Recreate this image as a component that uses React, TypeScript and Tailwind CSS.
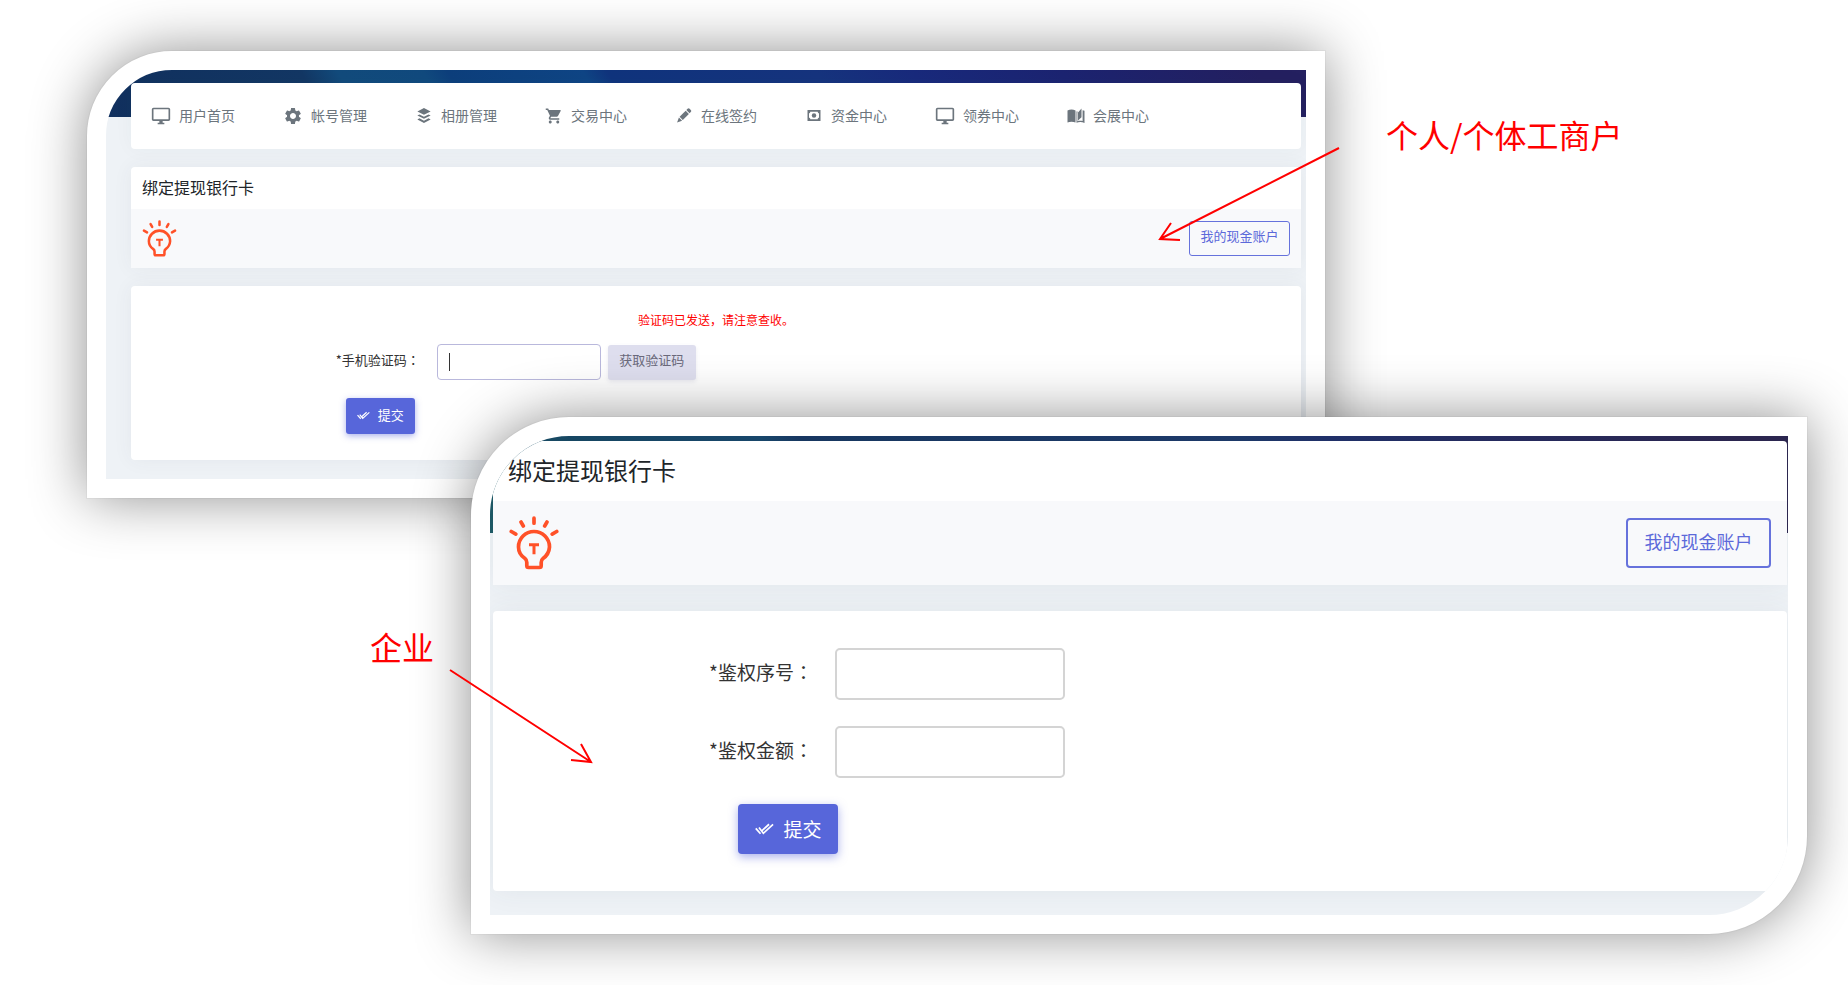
import type { ReactNode, SVGProps } from 'react';
import { MdOutlineDesktopWindows, MdSettings, MdShoppingCart } from 'react-icons/md';
import { SiBuffer } from 'react-icons/si';

function PencilIcon(props: SVGProps<SVGSVGElement>) {
  return (
    <svg viewBox="0 0 16 16" fill="currentColor" aria-hidden="true" {...props}>
      <path d="M11.8.9a1.600 1.600 0 0 1 2.200 0l1.200 1.200a1.600 1.600 0 0 1 0 2.200l-1.300 1.300-3.400-3.400z" />
      <path d="M9.800 2.900l3.400 3.400-6.500 6.500-3.400-3.400z" />
      <path d="M2.600 10.100l3.400 3.400L.6 15.400z" />
    </svg>
  );
}

function CashIcon(props: SVGProps<SVGSVGElement>) {
  return (
    <svg viewBox="0 0 16 14" fill="currentColor" aria-hidden="true" {...props}>
      <path
        fillRule="evenodd"
        d="M1 1h14v12H1zM4 3c0 1-.5 1.600-1.400 1.600v4.800c.9 0 1.400.6 1.400 1.600h8c0-1 .5-1.600 1.400-1.600V4.600c-.9 0-1.400-.6-1.400-1.600z"
      />
      <circle cx="8" cy="7" r="2.400" />
    </svg>
  );
}

function BookIcon(props: SVGProps<SVGSVGElement>) {
  return (
    <svg viewBox="0 0 18 16" fill="currentColor" aria-hidden="true" {...props}>
      <path d="M.5 2.500C3 1.300 6 1.300 8.500 2.500v12c-2.500-1.100-5.500-1.100-8 0z" />
      <path d="M11 4.500L14.500.6v8.700L11 12.500z" />
      <path d="M15.600 2.200l1.900.5v12.200c-2.500-1.100-5.400-1.200-8-.2V3.500l.9-.3v10.100c1.600-.5 3.500-.6 5.200-.2z" />
    </svg>
  );
}

function CheckAllIcon(props: SVGProps<SVGSVGElement>) {
  return (
    <svg viewBox="0 0 20 12" fill="none" stroke="currentColor" strokeWidth="1.800" aria-hidden="true" {...props}>
      <path d="M.8 5.300l5 5.700M4.200 4.500l4.600 6L19 1.200M6.800 8.300L14.800 1" />
    </svg>
  );
}

function BulbIcon(props: SVGProps<SVGSVGElement>) {
  return (
    <svg
      viewBox="0 0 50 54"
      fill="none"
      stroke="#ff5128"
      strokeWidth="3.700"
      strokeLinecap="round"
      strokeLinejoin="round"
      aria-hidden="true"
      {...props}
    >
      <path d="M25 2.200v5M12 6l2.300 4M38 6l-2.300 4M2.300 15.500l4.500 2.600M47.700 15.500l-4.500 2.600" />
      <path d="M19.600 51.500h10.800q1.800 0 1.800-2v-3c0-1.600.4-3 1.800-4A15.400 15.400 0 0 0 40.500 31a15.500 15.500 0 0 0-31 0c0 5 2.800 9 6.500 11.500 1.400 1 1.800 2.400 1.800 4v3q0 2 1.800 2z" />
      <path d="M21.500 28.700h7M25 28.700v8" strokeLinecap="square" strokeWidth="3" />
    </svg>
  );
}

const navItems: { label: string; icon: ReactNode }[] = [
  { label: '用户首页', icon: <MdOutlineDesktopWindows className="h-5 w-5" /> },
  { label: '帐号管理', icon: <MdSettings className="h-5 w-5" /> },
  { label: '相册管理', icon: <SiBuffer className="h-[15px] w-[18px]" /> },
  { label: '交易中心', icon: <MdShoppingCart className="h-[18px] w-[18px]" /> },
  { label: '在线签约', icon: <PencilIcon className="h-[15px] w-[18px]" /> },
  { label: '资金中心', icon: <CashIcon className="h-[13px] w-[18px]" /> },
  { label: '领券中心', icon: <MdOutlineDesktopWindows className="h-5 w-5" /> },
  { label: '会展中心', icon: <BookIcon className="h-4 w-[18px]" /> },
];

function NavBar() {
  return (
    <nav className="flex h-[66px] items-center gap-12 rounded-[4px] bg-white pb-px pl-[20px] text-[14px] text-[#6c757d] shadow-[0_0_20px_rgba(60,70,80,0.04)]">
      {navItems.map((item) => (
        <a key={item.label} href="#" className="flex shrink-0 items-center gap-2">
          {item.icon}
          {item.label}
        </a>
      ))}
    </nav>
  );
}

// Full-width colon set in the middle of its box
function Colon() {
  return <span className="font-['Noto_Sans_CJK_TC',sans-serif]">：</span>;
}

function PersonalPanel() {
  return (
    <section className="overflow-hidden rounded-tl-[85px] border-[19px] border-white bg-[#eef2f6] bg-[image:linear-gradient(60deg,#11305e_0%,#133764_18%,#124b7c_21%,#114a7e_28%,#0d3f7c_30%,#0f4585_41%,#10347d_43%,#16347e_60%,#192a7c_68%,#1c2471_80%,#242060_96%)] bg-[size:100%_47px] bg-no-repeat pt-[13px] pr-[5px] pb-[19px] pl-[25px] shadow-[0_0_0_1px_rgba(0,0,0,0.03),0_0_56px_rgba(0,0,0,0.44)]">
      <NavBar />

      <div className="mt-[18px] rounded-t-[4px] bg-white shadow-[0_0_20px_rgba(60,70,80,0.06)]">
        <h2 className="flex h-[42px] items-center pb-0.5 pl-[11px] text-[16px] text-[#212529]">绑定提现银行卡</h2>
        <div className="flex h-[59px] items-center justify-between bg-[#f8f9fb] pr-[11px] pb-px pl-[11px]">
          <BulbIcon className="h-[37px] w-[35px]" />
          <button type="button" className="h-[35px] w-[101px] rounded-[3px] border border-[#6672dc] pb-1 text-[13px] text-[#5c69da]">
            我的现金账户
          </button>
        </div>
      </div>

      <form className="mt-[18px] rounded-[4px] bg-white pt-6 pb-[26px] shadow-[0_0_20px_rgba(60,70,80,0.06)]">
        <p className="text-center text-[12px] leading-5 text-[#ff0000]">验证码已发送，请注意查收。</p>
        <div className="mt-[14px] flex items-center pl-[17.5%] text-[13px]">
          <label htmlFor="sms-code" className="w-[101px] shrink-0 pb-1 text-[#333]">
            *手机验证码
            <Colon />
          </label>
          <div className="flex h-9 w-[164px] items-center rounded-[4px] border border-[#b9b8dc] bg-white px-[11px]">
            <span className="h-[18px] w-px bg-[#333]" />
            <input id="sms-code" type="text" className="w-full min-w-0 outline-none" />
          </div>
          <button
            type="button"
            className="ml-[7px] h-[35px] w-[88px] rounded-[3px] bg-[#dedeee] pb-1 text-[#6b6a7b] shadow-[0_2px_4px_rgba(120,120,160,0.15)]"
          >
            获取验证码
          </button>
        </div>
        <div className="mt-[18px] pl-[17.5%]">
          <button
            type="submit"
            className="ml-[10px] flex h-9 w-[69px] items-center justify-center gap-2 rounded-[3px] bg-[#5766da] pb-0.5 text-[13px] text-white shadow-[0_2px_6px_rgba(87,102,218,0.5)]"
          >
            <CheckAllIcon className="h-[9px] w-[13px]" />
            提交
          </button>
        </div>
      </form>
    </section>
  );
}

function CompanyPanel() {
  return (
    <section className="overflow-hidden rounded-tl-[98px] rounded-br-[98px] border-[19px] border-white bg-[#eef2f6] bg-[image:linear-gradient(60deg,#1d5a66_0%,#164764_10%,#18476c_24%,#173762_27%,#1d396a_59%,#20306a_66%,#262b60_78%,#2c2650_96%)] bg-[size:100%_97px] bg-no-repeat pt-[5px] pr-px pb-6 pl-[3px] shadow-[0_0_0_1px_rgba(0,0,0,0.03),0_0_56px_rgba(0,0,0,0.44)]">
      <div className="rounded-t-[4px] bg-white shadow-[0_0_28px_rgba(60,70,80,0.07)]">
        <h2 className="flex h-[60px] items-center pb-0.5 pl-[15px] text-[24px] text-[#212529]">绑定提现银行卡</h2>
        <div className="flex h-[84px] items-center justify-between bg-[#f8f9fb] pr-4 pl-4">
          <BulbIcon className="h-[54px] w-[50px]" />
          <button type="button" className="h-[50px] w-[145px] rounded-[4px] border-2 border-[#6672dc] pb-1 text-[18px] text-[#5c69da]">
            我的现金账户
          </button>
        </div>
      </div>

      <form className="mt-[26px] rounded-[4px] bg-white py-[37px] shadow-[0_0_28px_rgba(60,70,80,0.07)]">
        <div className="flex flex-col gap-[26px] pl-[16.7%] text-[19px]">
          <div className="flex items-center">
            <label htmlFor="auth-no" className="w-[126px] shrink-0 pb-1 text-[#333]">
              *鉴权序号
              <Colon />
            </label>
            <input id="auth-no" type="text" className="h-[52px] w-[230px] rounded-[5px] border-2 border-[#d4d4d4] px-4 outline-none" />
          </div>
          <div className="flex items-center">
            <label htmlFor="auth-amount" className="w-[126px] shrink-0 pb-1 text-[#333]">
              *鉴权金额
              <Colon />
            </label>
            <input id="auth-amount" type="text" className="h-[52px] w-[230px] rounded-[5px] border-2 border-[#d4d4d4] px-4 outline-none" />
          </div>
          <button
            type="submit"
            className="ml-[29px] flex h-[50px] w-[100px] items-center justify-center gap-[10px] rounded-[4px] bg-[#5766da] text-white shadow-[0_3px_10px_rgba(87,102,218,0.5)]"
          >
            <CheckAllIcon className="h-3 w-[19px]" />
            提交
          </button>
        </div>
      </form>
    </section>
  );
}

export default function App() {
  return (
    <main className="overflow-hidden bg-white pt-[51px] pb-[51px] font-['Noto_Sans_CJK_SC',sans-serif]">
      <div className="grid grid-cols-[87fr_1238fr_523fr]">
        <div className="col-start-2">
          <PersonalPanel />
        </div>
        <div className="relative pt-[59px] pl-[61px]">
          <p className="text-[32px] leading-[48px] whitespace-nowrap text-[#ff0000]">个人/个体工商户</p>
          <svg
            className="absolute top-[90px] -left-[170px] h-[105px] w-[190px]"
            viewBox="0 0 190 105"
            fill="none"
            stroke="#ff0000"
            strokeWidth="2"
            aria-hidden="true"
          >
            <path d="M184 7L5 98M16 82L5 98l20 1" />
          </svg>
        </div>
      </div>

      <div className="relative -mt-[81px] grid grid-cols-[471fr_1336fr_41fr]">
        <div className="relative z-10 pt-[205px] pr-[37px] text-right">
          <p className="text-[32px] leading-[48px] whitespace-nowrap text-[#ff0000]">企业</p>
          <svg
            className="absolute top-[247px] -right-[125px] h-[104px] w-[150px]"
            viewBox="0 0 150 104"
            fill="none"
            stroke="#ff0000"
            strokeWidth="2"
            aria-hidden="true"
          >
            <path d="M4 6l141 92M135 80l10 18-20-2" />
          </svg>
        </div>
        <CompanyPanel />
      </div>
    </main>
  );
}
